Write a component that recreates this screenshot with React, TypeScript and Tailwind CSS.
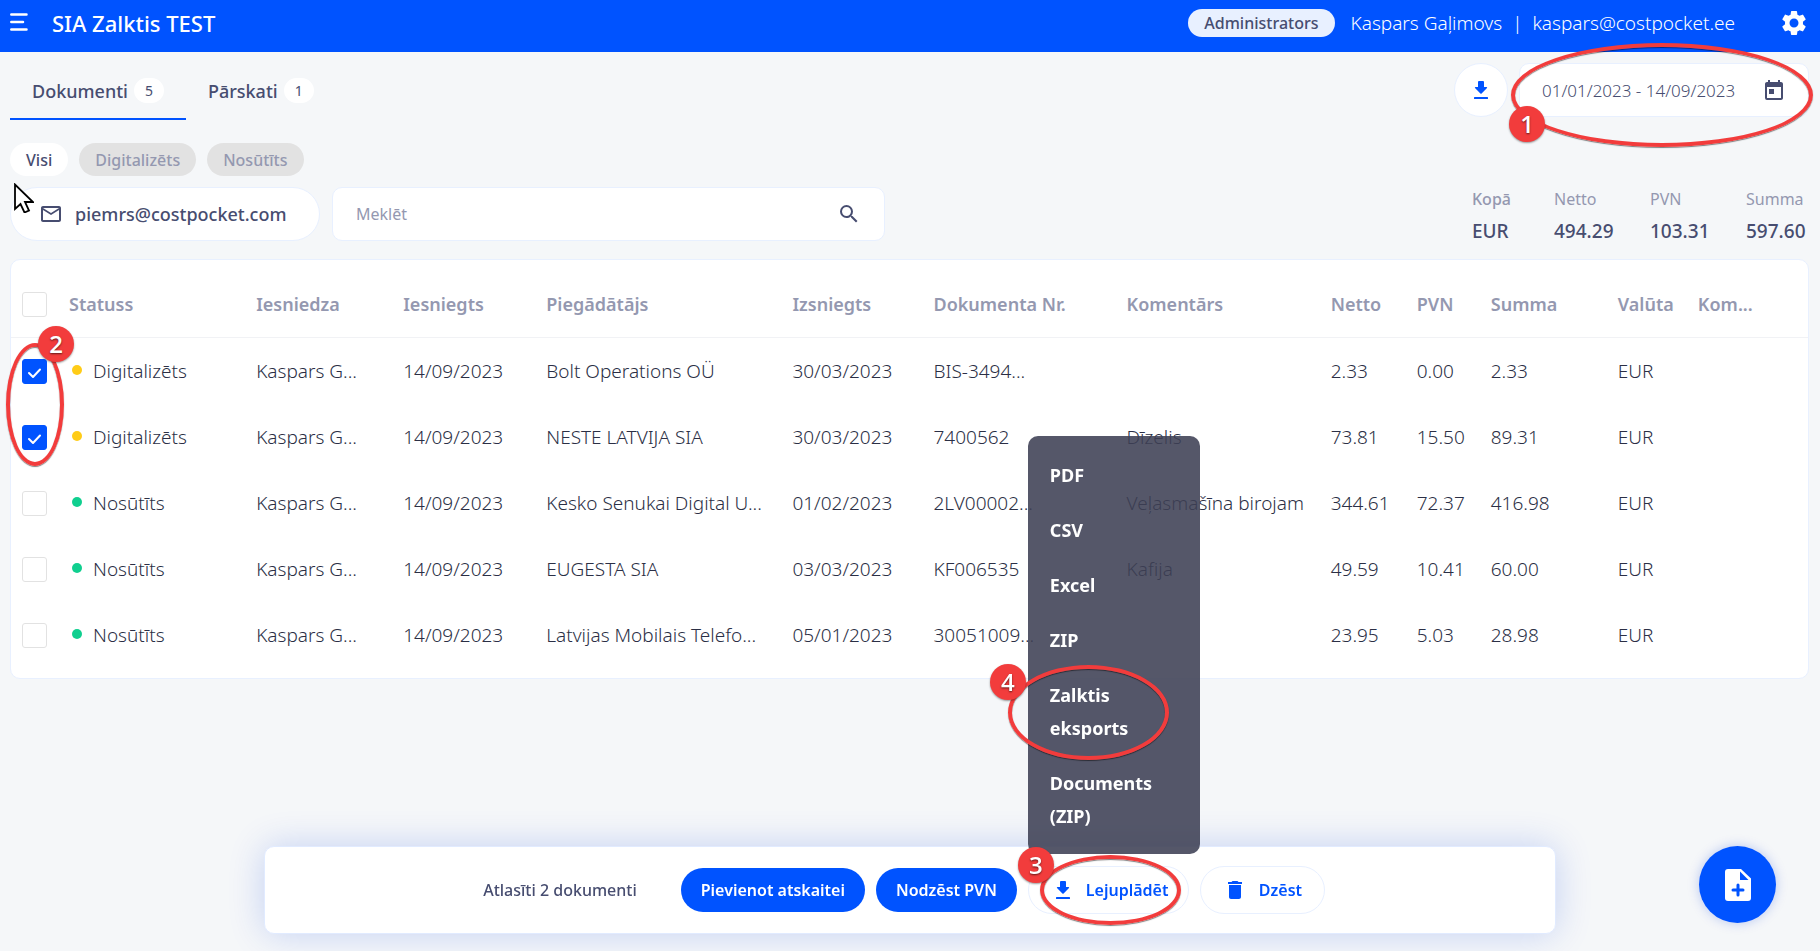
import type { ReactNode } from 'react';
import { MdDelete, MdMailOutline, MdSearch, MdSettings, MdToday } from 'react-icons/md';

type Row = {
  status: 'Digitalizēts' | 'Nosūtīts';
  submitter: string;
  submitted: string;
  supplier: string;
  issued: string;
  number: string;
  comment: string;
  net: string;
  vat: string;
  total: string;
  currency: string;
  selected: boolean;
};

const rows: Row[] = [
  { status: 'Digitalizēts', submitter: 'Kaspars G...', submitted: '14/09/2023', supplier: 'Bolt Operations OÜ', issued: '30/03/2023', number: 'BIS-3494...', comment: '', net: '2.33', vat: '0.00', total: '2.33', currency: 'EUR', selected: true },
  { status: 'Digitalizēts', submitter: 'Kaspars G...', submitted: '14/09/2023', supplier: 'NESTE LATVIJA SIA', issued: '30/03/2023', number: '7400562', comment: 'Dīzelis', net: '73.81', vat: '15.50', total: '89.31', currency: 'EUR', selected: true },
  { status: 'Nosūtīts', submitter: 'Kaspars G...', submitted: '14/09/2023', supplier: 'Kesko Senukai Digital U...', issued: '01/02/2023', number: '2LV00002...', comment: 'Veļasmašīna birojam', net: '344.61', vat: '72.37', total: '416.98', currency: 'EUR', selected: false },
  { status: 'Nosūtīts', submitter: 'Kaspars G...', submitted: '14/09/2023', supplier: 'EUGESTA SIA', issued: '03/03/2023', number: 'KF006535', comment: 'Kafija', net: '49.59', vat: '10.41', total: '60.00', currency: 'EUR', selected: false },
  { status: 'Nosūtīts', submitter: 'Kaspars G...', submitted: '14/09/2023', supplier: 'Latvijas Mobilais Telefo...', issued: '05/01/2023', number: '30051009...', comment: '', net: '23.95', vat: '5.03', total: '28.98', currency: 'EUR', selected: false },
];

const columns = [
  { label: 'Statuss', width: 'w-[187px]' },
  { label: 'Iesniedza', width: 'w-[147px]' },
  { label: 'Iesniegts', width: 'w-[143px]' },
  { label: 'Piegādātājs', width: 'w-[246px]' },
  { label: 'Izsniegts', width: 'w-[141px]' },
  { label: 'Dokumenta Nr.', width: 'w-[193px]' },
  { label: 'Komentārs', width: 'w-[204px]' },
  { label: 'Netto', width: 'w-[86px]' },
  { label: 'PVN', width: 'w-[74px]' },
  { label: 'Summa', width: 'w-[127px]' },
  { label: 'Valūta', width: 'w-[80px]' },
  { label: 'Kom...', width: 'w-[110px]' },
];

const totals = [
  { label: 'Kopā', value: 'EUR', strong: true, width: 'w-[82px]' },
  { label: 'Netto', value: '494.29', strong: false, width: 'w-24' },
  { label: 'PVN', value: '103.31', strong: false, width: 'w-24' },
  { label: 'Summa', value: '597.60', strong: false, width: 'w-[63px]' },
];

const exportOptions = ['PDF', 'CSV', 'Excel', 'ZIP', 'Zalktis eksports', 'Documents (ZIP)'];

function DownloadIcon({ className }: { className: string }) {
  return (
    <svg viewBox="0 0 14 18" fill="currentColor" className={className} aria-hidden="true">
      <path d="M5 0h4a1 1 0 0 1 1 1v5h2.6a.6.6 0 0 1 .4 1L7.6 12.600a.9.9 0 0 1-1.200 0L1 7a.6.6 0 0 1 .4-1H4V1a1 1 0 0 1 1-1z" />
      <rect x="0" y="16" width="14" height="2" rx="0.500" />
    </svg>
  );
}

function Ring({ className }: { className: string }) {
  return (
    <span
      aria-hidden="true"
      className={`pointer-events-none absolute z-20 rounded-[50%] border-4 border-[#f23c3c] shadow-[0_1px_1px_rgba(0,0,0,0.5),inset_0_1px_1px_rgba(0,0,0,0.5)] ${className}`}
    />
  );
}

function Step({ className, children }: { className: string; children: ReactNode }) {
  return (
    <span
      className={`pointer-events-none absolute z-30 flex size-9 items-center justify-center rounded-full bg-[#f23c3c] font-['Open_Sans',sans-serif] text-2xl font-semibold text-white shadow-[0_1px_2px_rgba(0,0,0,0.4)] [text-shadow:0_1px_2px_rgba(0,0,0,0.6)] ${className}`}
    >
      {children}
    </span>
  );
}

function CheckBox({ label, checked }: { label: string; checked: boolean }) {
  return (
    <span className="relative block size-[25px]">
      <input
        type="checkbox"
        aria-label={label}
        defaultChecked={checked}
        className="peer block size-[25px] appearance-none rounded-[3px] border border-[#e2e2e2] bg-white checked:border-[#0053ff] checked:bg-[#0053ff]"
      />
      <svg
        viewBox="0 0 25 25"
        fill="none"
        stroke="white"
        strokeWidth="2"
        strokeLinecap="round"
        strokeLinejoin="round"
        className="pointer-events-none absolute inset-0 hidden size-[25px] peer-checked:block"
        aria-hidden="true"
      >
        <path d="M7 14l4 4 7-7.500" />
      </svg>
    </span>
  );
}

function Header() {
  return (
    <header className="flex h-[52px] items-center bg-[#0053ff] pr-[11px] pl-[10px] text-white">
      <button type="button" aria-label="Izvēlne" className="pb-2">
        <svg viewBox="0 0 18 18" fill="none" stroke="white" strokeWidth="2.500" strokeLinecap="round" className="size-[18px]">
          <path d="M1.300 1.500H16.500M1.300 9H13M1.300 16.500H16.500" />
        </svg>
      </button>
      <h1 className="ml-6 pb-1.5 text-[22px] font-medium">SIA Zalktis TEST</h1>
      <div className="ml-auto flex items-center pb-1.5 text-[19px] font-light">
        <span className="mr-4 flex h-7 items-center rounded-full bg-[#e8f0ff] px-4 text-base font-medium text-[#474d70]">
          Administrators
        </span>
        <span>Kaspars Gaļimovs</span>
        <span className="mx-2.5">|</span>
        <span>kaspars@costpocket.ee</span>
        <button type="button" aria-label="Iestatījumi" className="ml-11">
          <MdSettings className="size-[30px]" />
        </button>
      </div>
    </header>
  );
}

export default function App() {
  return (
    <div className="relative min-h-screen bg-[#f5f7f9] font-['Noto_Sans',Roboto,sans-serif] text-[#474d70]">
      <Header />
      <main className="pr-[11px] pl-[10px]">
        <div className="flex items-start justify-between pt-[11px]">
          <nav className="flex h-[57px] text-lg font-medium">
            <a href="#dokumenti" className="flex h-full items-center gap-1.5 border-b-2 border-[#0053ff] px-[22px]">
              Dokumenti
              <span className="flex h-[25px] w-[30px] items-center justify-center rounded-full bg-white text-sm font-normal">5</span>
            </a>
            <a href="#parskati" className="flex h-full items-center gap-1.5 border-b-2 border-transparent px-[22px]">
              Pārskati
              <span className="flex h-[25px] w-[30px] items-center justify-center rounded-full bg-white text-sm font-normal">1</span>
            </a>
          </nav>
          <div className="relative flex gap-[11px]">
            <button
              type="button"
              aria-label="Lejuplādēt"
              className="flex size-[54px] items-center justify-center rounded-full border border-[#e8f0ff] bg-white text-[#0053ff]"
            >
              <DownloadIcon className="h-[18px] w-[14px]" />
            </button>
            <button
              type="button"
              className="flex h-[54px] w-[290px] items-center justify-between rounded-[10px] border border-[#e8f0ff] bg-white px-[22px] pt-0.5 text-[17px] font-light"
            >
              01/01/2023 - 14/09/2023
              <MdToday className="size-6" />
            </button>
            <Ring className="-top-5 -right-1 h-[104px] w-[302px]" />
            <Step className="top-[43px] right-[264px]">1</Step>
          </div>
        </div>

        <div className="flex items-center gap-[11px] pt-[23px] text-base font-medium">
          <button type="button" className="h-[33px] rounded-full bg-white px-4">Visi</button>
          <button type="button" className="h-[33px] rounded-full bg-[#e2e2e2] px-4 text-[#9498b0]">Digitalizēts</button>
          <button type="button" className="h-[33px] rounded-full bg-[#e2e2e2] px-4 text-[#9498b0]">Nosūtīts</button>
        </div>

        <div className="relative flex items-start pt-[11px]">
          <a
            href="mailto:piemrs@costpocket.com"
            className="flex h-[54px] w-[310px] items-center gap-3 rounded-full border border-[#e8f0ff] bg-white pl-7 text-lg font-medium"
          >
            <MdMailOutline className="size-6" />
            piemrs@costpocket.com
          </a>
          <svg viewBox="0 0 20 30" className="absolute top-[7px] left-1 h-[30px] w-5" aria-hidden="true">
            <path d="M1 1.500V26l5.500-5 4 8.500 4.500-2-4-8.500h8z" fill="white" stroke="black" strokeWidth="1.800" strokeLinejoin="miter" />
          </svg>
          <label className="ml-3 flex h-[54px] w-[553px] items-center rounded-[10px] border border-[#e8f0ff] bg-white px-[23px] text-base">
            <input type="text" placeholder="Meklēt" aria-label="Meklēt" className="min-w-0 flex-1 outline-none placeholder:text-[#9498b0]" />
            <MdSearch className="size-6" />
          </label>
          <dl className="ml-auto flex">
            {totals.map((item) => (
              <div key={item.label} className={`flex flex-col ${item.width}`}>
                <dt className={item.strong ? 'text-base leading-6 font-medium text-[#9498b0]' : 'text-base leading-6 text-[#9498b0]'}>
                  {item.label}
                </dt>
                <dd className="mt-2 text-[19px] leading-6 font-medium">{item.value}</dd>
              </div>
            ))}
          </dl>
        </div>

        <section className="relative mt-4 rounded-[10px] border border-[#e8f0ff] bg-white pb-[11px]">
          <table className="w-full table-fixed text-left whitespace-nowrap">
            <thead>
              <tr className="h-[77px] border-b border-[#f1f2f5] text-lg text-[#9498b0]">
                <th className="w-[58px] pt-3 pl-[11px]">
                  <CheckBox label="Atlasīt visus" checked={false} />
                </th>
                {columns.map((column) => (
                  <th key={column.label} className={`pt-3 font-semibold ${column.width}`}>
                    {column.label}
                  </th>
                ))}
              </tr>
            </thead>
            <tbody className="text-[19px] font-light text-[#2b2f45]">
              {rows.map((row) => (
                <tr key={row.number} className="h-[66px]">
                  <td className="pt-0.5 pl-[11px]">
                    <CheckBox label={row.supplier} checked={row.selected} />
                  </td>
                  <td className="pt-0.5">
                    <span className="flex items-center">
                      <span
                        className={
                          row.status === 'Digitalizēts'
                            ? 'mr-[11px] mb-0.5 ml-[3px] size-[10px] rounded-full bg-[#ffcc17]'
                            : 'mr-[11px] mb-0.5 ml-[3px] size-[10px] rounded-full bg-[#10cf8f]'
                        }
                      />
                      {row.status}
                    </span>
                  </td>
                  <td className="pt-0.5">{row.submitter}</td>
                  <td className="pt-0.5">{row.submitted}</td>
                  <td className="pt-0.5">{row.supplier}</td>
                  <td className="pt-0.5">{row.issued}</td>
                  <td className="pt-0.5">{row.number}</td>
                  <td className="pt-0.5">{row.comment}</td>
                  <td className="pt-0.5">{row.net}</td>
                  <td className="pt-0.5">{row.vat}</td>
                  <td className="pt-0.5">{row.total}</td>
                  <td className="pt-0.5">{row.currency}</td>
                  <td className="pt-0.5" />
                </tr>
              ))}
            </tbody>
          </table>
          <Ring className="top-[83px] -left-[5px] h-[123px] w-[58px]" />
          <Step className="top-[66px] left-[27px]">2</Step>
        </section>
      </main>

      <div className="fixed inset-x-[264px] bottom-[17px] flex h-[88px] items-center justify-center rounded-[10px] border border-[#e1ebff] bg-white pr-3 text-base shadow-[0_0_36px_rgba(0,60,220,0.2)]">
        <span className="mr-11 font-medium">Atlasīti 2 dokumenti</span>
        <button type="button" className="mr-[11px] h-11 rounded-full bg-[#0053ff] px-5 font-semibold text-white">
          Pievienot atskaitei
        </button>
        <button type="button" className="mr-[11px] h-11 rounded-full bg-[#0053ff] px-5 font-semibold text-white">
          Nodzēst PVN
        </button>
        <div className="relative mr-[11px]">
          <button
            type="button"
            className="flex h-12 w-[161px] items-center gap-4 rounded-full border border-[#e8f0ff] bg-white pl-[27px] font-semibold text-[#0053ff]"
          >
            <DownloadIcon className="h-[18px] w-[14px]" />
            Lejuplādēt
          </button>
          <div
            role="menu"
            className="absolute bottom-full left-0 mb-3 flex w-[172px] flex-col rounded-[10px] bg-[#3e4054]/88 pt-3 pb-[10px] text-lg leading-[33px] font-bold text-white"
          >
            {exportOptions.map((option) => (
              <button key={option} type="button" role="menuitem" className="py-[11px] pr-10 pl-[22px] text-left">
                {option}
              </button>
            ))}
            <Ring className="bottom-[94px] -left-5 h-[95px] w-[161px]" />
            <Step className="bottom-[154px] -left-[38px]">4</Step>
          </div>
          <Ring className="-top-[11px] left-3 h-[70px] w-[141px]" />
          <Step className="-top-[19px] -left-[10px]">3</Step>
        </div>
        <button
          type="button"
          className="flex h-12 w-[125px] items-center gap-3 rounded-full border border-[#e8f0ff] bg-white pl-[22px] font-semibold text-[#0053ff]"
        >
          <MdDelete className="size-6" />
          Dzēst
        </button>
      </div>

      <button
        type="button"
        aria-label="Pievienot dokumentu"
        className="fixed right-11 bottom-7 flex size-[77px] items-center justify-center rounded-full bg-[#0053ff] shadow-[0_0_12px_rgba(0,60,220,0.25)]"
      >
        <svg viewBox="0 0 26 32" className="h-8 w-[26px]" aria-hidden="true">
          <path d="M3 0h13l10 9.500V29a3 3 0 0 1-3 3H3a3 3 0 0 1-3-3V3a3 3 0 0 1 3-3z" fill="white" />
          <path d="M15 2.500v8.500h8.500z" fill="#0053ff" />
          <path d="M13 16v10M8 21h10" stroke="#0053ff" strokeWidth="3" strokeLinecap="round" />
        </svg>
      </button>
    </div>
  );
}
